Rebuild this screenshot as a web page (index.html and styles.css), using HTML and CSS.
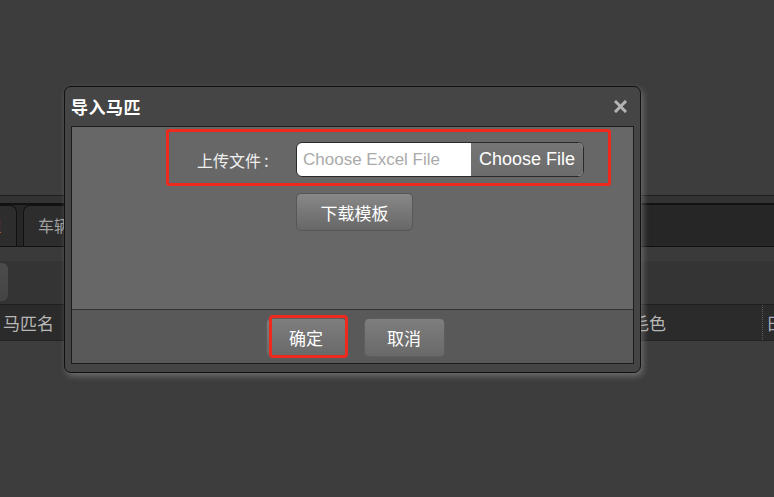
FILE: index.html
```html
<!DOCTYPE html>
<html lang="zh-CN">
<head>
  <meta charset="UTF-8" />
  <title>导入马匹</title>
  <link rel="stylesheet" href="styles.css">
</head>
<body>
  <!-- Page behind the dialog -->
  <div class="page">
    <div class="tab-strip">
      <div class="tabs">
        <div class="tab active">马匹管理</div>
        <div class="tab">车辆管理</div>
        <div class="tab">人员管理</div>
      </div>
    </div>
    <div class="toolbar">
      <button class="tool-btn" title="导入"></button>
    </div>
    <div class="grid-head">
      <div class="col col-a">马匹名</div>
      <div class="col col-c">毛色</div>
      <div class="col col-d">日期</div>
    </div>
  </div>

  <!-- Import dialog -->
  <div class="dialog">
    <div class="dialog-title">
      <span>导入马匹</span>
      <svg class="close" width="13" height="13" viewBox="0 0 13 13">
        <path d="M2 2 L11 11 M11 2 L2 11" stroke="#b4b4b4" stroke-width="3" stroke-linecap="square" fill="none"/>
      </svg>
    </div>
    <div class="dialog-box">
      <div class="dialog-body">
        <div class="upload-row">
          <label class="upload-label">上传文件<span class="colon">:</span></label>
          <div class="file-input">
            <span class="file-name">Choose Excel File</span>
            <span class="file-btn">Choose File</span>
          </div>
        </div>
        <button class="btn btn-template">下载模板</button>
      </div>
      <div class="dialog-foot">
        <button class="btn btn-foot btn-ok">确定</button>
        <button class="btn btn-foot">取消</button>
      </div>
    </div>
  </div>
</body>
</html>
```

FILE: styles.css
```css
body {
  margin: 0;
  width: 774px;
  height: 497px;
  overflow: hidden;
  background: #3d3d3d;
  font-family: "Noto Sans CJK SC", sans-serif;
  position: relative;
}

.page {
  padding-top: 195px;
}

.tab-strip {
  border-top: 1px solid #1e1e1e;
  padding-top: 7px;
  background: #333;
}

.tabs {
  display: flex;
  height: 41px;
  background: #262626;
  border-top: 2px solid #111;
  border-bottom: 1px solid #111;
}

.tab {
  height: 41px;
  box-sizing: border-box;
  padding: 0 13px;
  margin-right: 6px;
  border: 1px solid #111;
  border-bottom: none;
  border-radius: 7px 7px 0 0;
  background: #2d2d2d;
  color: #a0a0a0;
  font-size: 16px;
  line-height: 39px;
  white-space: nowrap;
}

.tab.active {
  margin-left: -77px;
  padding-right: 15px;
  color: #b98a4a;
}

.tab + .tab {
  padding-left: 14px;
}

.toolbar {
  height: 57px;
  box-sizing: border-box;
  padding-top: 16px;
  background: linear-gradient(to bottom, #3a3a3a 14px, #343434 14px);
}

.tool-btn {
  display: block;
  margin-left: -60px;
  width: 68px;
  height: 38px;
  border: none;
  border-radius: 6px;
  background: linear-gradient(#4c4c4c, #444);
}

.grid-head {
  display: flex;
  align-items: center;
  height: 35px;
  border-top: 1px solid #1e1e1e;
  border-bottom: 1px solid #222;
  background: #2b2b2b;
  color: #b8b8b8;
  font-size: 17px;
}

.col {
  height: 35px;
  line-height: 35px;
  box-sizing: border-box;
  padding-left: 3px;
  border-right: 1px dotted #5a5a5a;
  white-space: nowrap;
  overflow: hidden;
}

.col-a { width: 630px; }
.col-c { width: 133px; padding-left: 2px; }
.col-d { flex: 1; border-right: none; color: #aab; }

/* dialog */
.dialog {
  position: absolute;
  left: 64px;
  top: 86px;
  width: 577px;
  box-sizing: border-box;
  border: 1px solid #111;
  border-radius: 7px;
  background: #454545;
  box-shadow: 2px 3px 6px rgba(150, 150, 150, 0.55);
}

.dialog-title {
  height: 39px;
  display: flex;
  align-items: center;
  justify-content: space-between;
  padding: 0 13px 0 6px;
  color: #fff;
  font-size: 17px;
  font-weight: bold;
  letter-spacing: 0.5px;
}

.close {
  display: block;
}

.dialog-box {
  margin: 0 6px 8px;
  border: 1px solid #1c1c1c;
}

.dialog-body {
  height: 182px;
  box-sizing: border-box;
  padding-top: 2px;
  background: #676767;
}

.upload-row {
  display: flex;
  align-items: center;
  margin-left: 94px;
  width: 445px;
  height: 57px;
  box-sizing: border-box;
  padding: 10px 24px 6px 28px;
  border: 3px solid #ee2a1f;
  border-radius: 3px;
}

.upload-label {
  color: #f0f0f0;
  font-size: 16px;
}

.colon {
  margin-left: 3px;
  font-size: 17px;
}

.file-input {
  margin-left: auto;
  width: 288px;
  height: 35px;
  box-sizing: border-box;
  display: flex;
  border: 1px solid #2a2a2a;
  border-radius: 6px;
  background: #fff;
  overflow: hidden;
}

.file-name {
  flex: 1;
  padding-left: 6px;
  color: #aaa;
  font-family: "Liberation Sans", sans-serif;
  font-size: 17px;
  line-height: 33px;
}

.file-btn {
  width: 112px;
  background: linear-gradient(#757575, #6c6c6c);
  color: #fff;
  font-family: "Liberation Sans", sans-serif;
  font-size: 18px;
  line-height: 33px;
  text-align: center;
}

.btn {
  box-sizing: border-box;
  border: 1px solid #575757;
  border-radius: 5px;
  background: linear-gradient(#888, #676767);
  color: #fff;
  font-family: "Noto Sans CJK SC", sans-serif;
  font-size: 17px;
  cursor: pointer;
}

.btn-template {
  display: block;
  margin: 7px 0 0 224px;
  width: 117px;
  height: 38px;
}

.dialog-foot {
  height: 54px;
  box-sizing: border-box;
  display: flex;
  justify-content: center;
  gap: 17px;
  padding: 8px 0 0 5px;
  border-top: 1px solid #333;
  background: #595959;
}

.btn-foot {
  width: 81px;
  height: 39px;
  border-color: #5e5e5e;
  background: linear-gradient(#7e7e7e, #696969);
}

.btn-ok {
  position: relative;
}

.btn-ok::after {
  content: "";
  position: absolute;
  left: 2px;
  right: -2px;
  top: -4px;
  bottom: -2px;
  border: 3px solid #ee2a1f;
  border-radius: 4px;
}
```
